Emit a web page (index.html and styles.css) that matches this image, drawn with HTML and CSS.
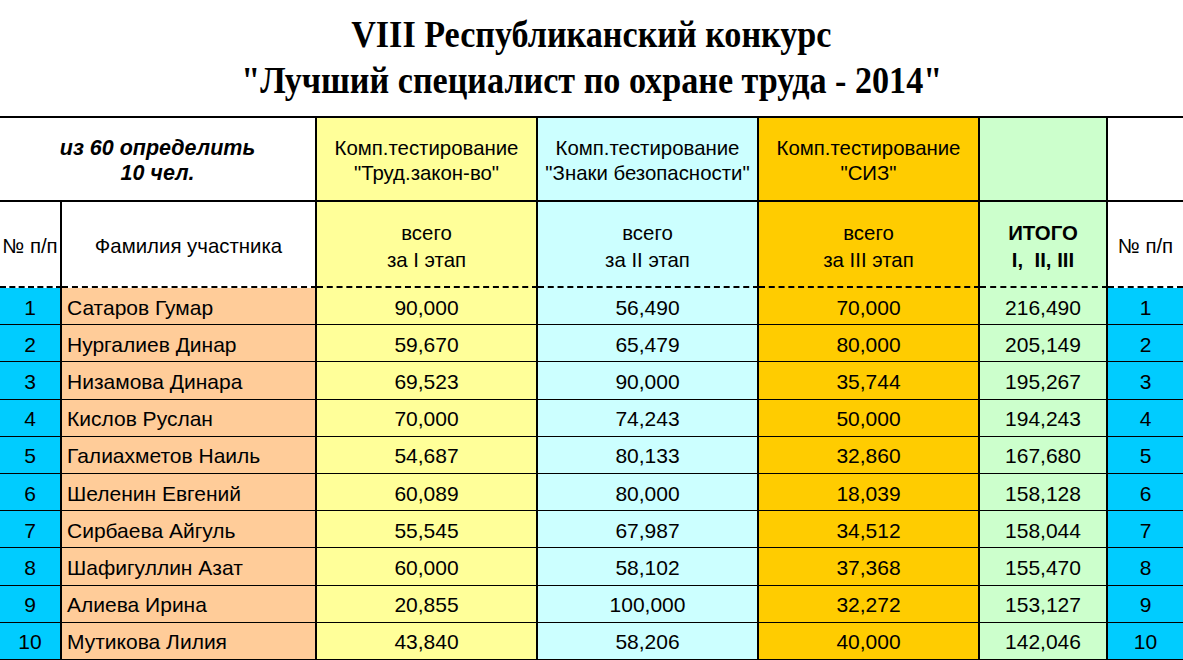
FILE: index.html
```html
<!DOCTYPE html>
<html lang="ru">
<head>
<meta charset="utf-8">
<title>Лучший специалист по охране труда - 2014</title>
<link rel="stylesheet" href="styles.css">
</head>
<body>
<header class="title">
  <h1 class="title-line">VIII Республиканский конкурс</h1>
  <h1 class="title-line">"Лучший специалист по охране труда - 2014"</h1>
</header>
<div class="sheet head">
  <div class="cell h1 span2 white italic"><span>из 60 определить<br>10 чел.</span></div>
  <div class="cell h1 yellow"><span>Комп.тестирование<br>"Труд.закон-во"</span></div>
  <div class="cell h1 ltcyan"><span>Комп.тестирование<br>"Знаки безопасности"</span></div>
  <div class="cell h1 gold"><span>Комп.тестирование<br>"СИЗ"</span></div>
  <div class="cell h1 green"></div>
  <div class="cell h1 white last"></div>

  <div class="cell h2 white"><span>№ п/п</span></div>
  <div class="cell h2 white"><span>Фамилия участника</span></div>
  <div class="cell h2 yellow"><span>всего<br>за I этап</span></div>
  <div class="cell h2 ltcyan"><span>всего<br>за II этап</span></div>
  <div class="cell h2 gold"><span>всего<br>за III этап</span></div>
  <div class="cell h2 green bold"><span>ИТОГО<br>I,&nbsp; II, III</span></div>
  <div class="cell h2 white last"><span>№ п/п</span></div>
</div>
<div class="sheet body" id="rows"></div>
<script src="app.js"></script>
</body>
</html>
```
FILE: app.js
```js
const data = [
  ["Сатаров Гумар","90,000","56,490","70,000","216,490"],
  ["Нургалиев Динар","59,670","65,479","80,000","205,149"],
  ["Низамова Динара","69,523","90,000","35,744","195,267"],
  ["Кислов Руслан","70,000","74,243","50,000","194,243"],
  ["Галиахметов Наиль","54,687","80,133","32,860","167,680"],
  ["Шеленин Евгений","60,089","80,000","18,039","158,128"],
  ["Сирбаева Айгуль","55,545","67,987","34,512","158,044"],
  ["Шафигуллин Азат","60,000","58,102","37,368","155,470"],
  ["Алиева Ирина","20,855","100,000","32,272","153,127"],
  ["Мутикова Лилия","43,840","58,206","40,000","142,046"]
];
const rows = document.getElementById("rows");
const cls = ["cyan", "peach name", "yellow", "ltcyan", "gold", "green", "cyan last"];
data.forEach((r, i) => {
  const vals = [String(i + 1), ...r, String(i + 1)];
  vals.forEach((v, j) => {
    const d = document.createElement("div");
    d.className = "cell row " + cls[j];
    d.textContent = v;
    rows.appendChild(d);
  });
});
```
FILE: styles.css
```css
* { box-sizing: border-box; }
html, body { margin: 0; padding: 0; background: #fff; }
body {
  width: 1183px;
  height: 660px;
  overflow: hidden;
  font-family: "Liberation Sans", Arial, sans-serif;
  font-size: 20px;
  color: #000;
}
.title {
  height: 116px;
  display: flex;
  flex-direction: column;
  align-items: center;
  padding-top: 12px;
}
.title-line {
  margin: 0;
  font-family: "Liberation Serif", "Times New Roman", serif;
  font-weight: bold;
  font-size: 36px;
  line-height: 46px;
  white-space: nowrap;
  transform: scale(0.948, 1.04);
}
.sheet {
  display: grid;
  grid-template-columns: 62px 255px 221px 221px 221px 128px 75px;
}
.head { border-top: 2px solid #000; }
.cell {
  border-right: 2px solid #000;
  display: flex;
  flex-direction: column;
  align-items: center;
  justify-content: center;
  text-align: center;
  white-space: nowrap;
}
.cell.last { border-right: none; }
.span2 { grid-column: span 2; }
.h1 {
  height: 84px;
  border-bottom: 2px solid #000;
  line-height: 25px;
  padding-top: 4px;
  font-size: 20.4px;
}
.h2 {
  height: 86px;
  border-bottom: 2px dashed #000;
  line-height: 27px;
  padding-top: 5px;
  font-size: 20.4px;
}
.italic { font-style: italic; font-weight: bold; font-size: 21.5px; }
.bold { font-weight: bold; }
.row {
  height: 37.2px;
  border-bottom: 1px solid #000;
  line-height: 36px;
  font-size: 21px;
  padding-top: 3px;
}
.name { align-items: flex-start; padding-left: 5px; }
.white { background: #fff; }
.yellow { background: #ffff99; }
.ltcyan { background: #ccffff; }
.gold { background: #ffcc00; }
.green { background: #ccffcc; }
.cyan { background: #00ccff; }
.peach { background: #ffcc99; }
```
